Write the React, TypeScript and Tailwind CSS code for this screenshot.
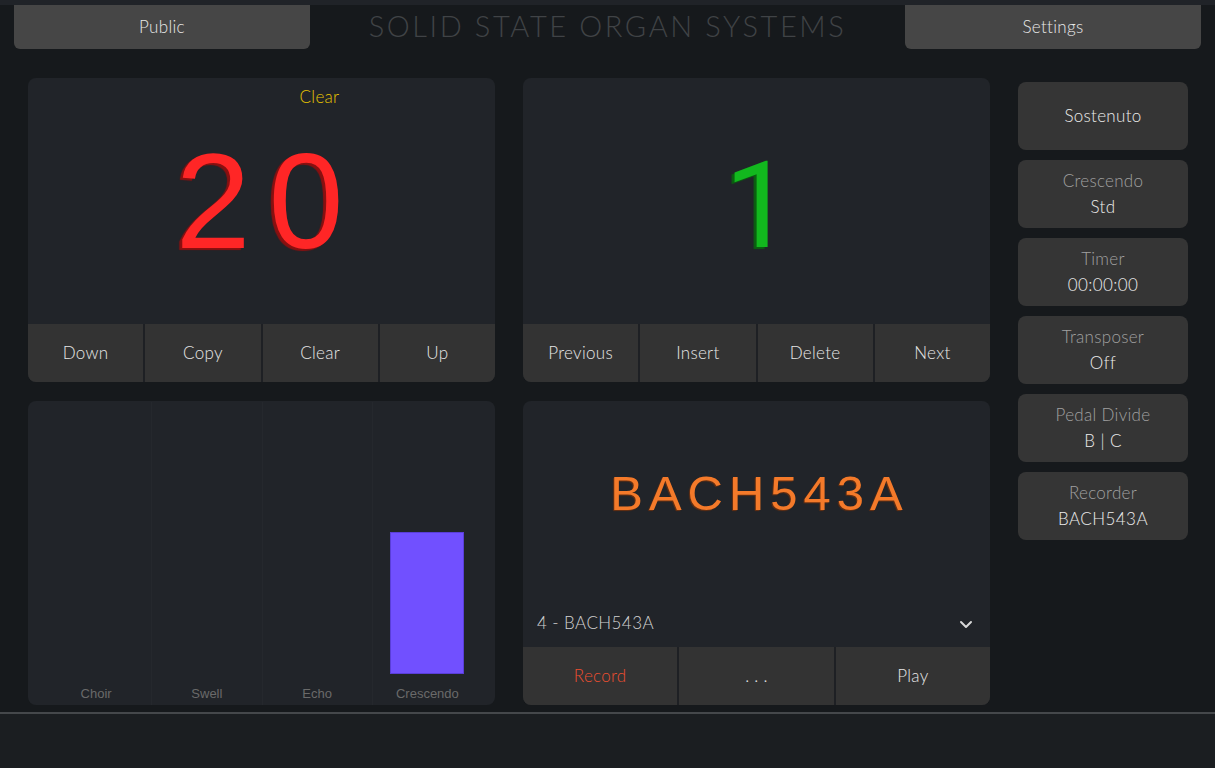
const ui = { fontFamily: "Lato, 'Noto Sans', sans-serif" };
const arial = { fontFamily: "'Liberation Sans', Arial, sans-serif" };
const roboto = { fontFamily: "Roboto, 'Liberation Sans', sans-serif" };

function RowButton({ label, className = "" }: { label: string; className?: string }) {
  return (
    <button className={`flex-1 bg-[#333333] flex items-center justify-center text-[17px] font-light text-[#e6e6e6] tracking-[0.3px] ${className}`}>
      {label}
    </button>
  );
}

function SideTile({ label, value }: { label: string; value?: string }) {
  return (
    <div className="h-[68px] rounded-lg bg-[#353535] flex flex-col items-center justify-center leading-[26px] font-light tracking-[0.3px]">
      {value ? (
        <>
          <span className="text-[17px] text-[#a0a0a0]">{label}</span>
          <span className="text-[17px] text-[#ececec] tracking-wide">{value}</span>
        </>
      ) : (
        <span className="text-[17px] text-[#ececec]">{label}</span>
      )}
    </div>
  );
}

const columns = [
  { name: "Choir", level: 0 },
  { name: "Swell", level: 0 },
  { name: "Echo", level: 0 },
  { name: "Crescendo", level: 142 },
];

export default function App() {
  return (
    <div className="w-[1215px] h-[768px] bg-[#16191c] flex flex-col overflow-hidden" style={ui}>
      <div className="h-[5px] bg-[#202328]" />
      <header className="flex items-start justify-between px-[14px]">
        <button className="w-[296px] h-[44px] bg-[#464646] rounded-b-md text-[17px] font-light tracking-[0.3px] text-[#e8e8e8]">Public</button>
        <h1 className="text-[29px] font-light tracking-[2.6px] text-[#404346] leading-[42px]">SOLID STATE ORGAN SYSTEMS</h1>
        <button className="w-[296px] h-[44px] bg-[#464646] rounded-b-md text-[17px] font-light tracking-[0.3px] text-[#e8e8e8]">Settings</button>
      </header>

      <main className="flex gap-[28px] pl-[28px] pt-[29px]">
        <div className="grid grid-cols-[467px_467px] grid-rows-[304px_304px] gap-x-[28px] gap-y-[19px]">
          {/* combination panel */}
          <section className="bg-[#212429] rounded-lg overflow-hidden flex flex-col">
            <div className="flex-1 flex flex-col items-center">
              <span className="mt-[6px] ml-[116px] text-[17px] font-light tracking-[0.3px] text-[#e8c400]">Clear</span>
              <span
                className="mt-[24px] ml-[-4px] text-[135px] leading-none text-[#ff2626] tracking-[18px] pl-[18px] [text-shadow:-3px_2px_1px_#8a1010]"
                style={arial}
              >
                20
              </span>
            </div>
            <div className="h-[58px] flex gap-[2px] bg-[#1e2024]">
              <RowButton label="Down" />
              <RowButton label="Copy" />
              <RowButton label="Clear" />
              <RowButton label="Up" />
            </div>
          </section>

          {/* sequencer panel */}
          <section className="bg-[#212429] rounded-lg overflow-hidden flex flex-col">
            <div className="flex-1 flex items-center justify-center">
              <span
                className="mt-[10px] ml-[4px] text-[121px] leading-none text-[#12b81e] [text-shadow:-3px_2px_1px_#0a6010]"
                style={roboto}
              >
                1
              </span>
            </div>
            <div className="h-[58px] flex gap-[2px] bg-[#1e2024]">
              <RowButton label="Previous" />
              <RowButton label="Insert" />
              <RowButton label="Delete" />
              <RowButton label="Next" />
            </div>
          </section>

          {/* expression chart */}
          <section className="bg-[#212429] rounded-lg flex flex-col px-[13px] pt-[1px]">
            <div className="flex-1 grid grid-cols-4">
              {columns.map((c, i) => (
                <div key={c.name} className={`flex flex-col ${i > 0 ? "border-l border-[#25282d]" : ""}`}>
                  <div className="flex-1 flex items-end justify-center pb-[9px]">
                    {c.level > 0 && (
                      <div
                        className="w-[74px] bg-[#7150ff] border border-[#5a3ed8]"
                        style={{ height: `${c.level}px` }}
                      />
                    )}
                  </div>
                  <span className="text-center text-[13px] text-[#6a6a6a] leading-[22px]" style={arial}>
                    {c.name}
                  </span>
                </div>
              ))}
            </div>
          </section>

          {/* recorder panel */}
          <section className="bg-[#212429] rounded-lg overflow-hidden flex flex-col">
            <div className="flex-1 flex items-center justify-center">
              <span
                className="mt-[-14px] text-[49px] leading-none text-[#f47a2a] tracking-[6px] pl-[6px] [text-shadow:-1px_1px_1px_#6a3010]"
                style={arial}
              >
                BACH543A
              </span>
            </div>
            <div className="h-[48px] flex items-center justify-between px-[14px]">
              <span className="text-[17px] font-light text-[#d2d2d2] tracking-wide">4 - BACH543A</span>
              <svg width="14" height="9" viewBox="0 0 14 9" fill="none" className="mr-[3px] mt-[3px]">
                <path d="M2 2l5 5 5-5" stroke="#d8d8d8" strokeWidth="2" strokeLinecap="round" strokeLinejoin="round" />
              </svg>
            </div>
            <div className="h-[58px] flex gap-[2px] bg-[#1e2024]">
              <RowButton label="Record" className="!text-[#ec4e30]" />
              <RowButton label=". . ." />
              <RowButton label="Play" />
            </div>
          </section>
        </div>

        <aside className="w-[170px] flex flex-col gap-[10px] pt-[4px]">
          <SideTile label="Sostenuto" />
          <SideTile label="Crescendo" value="Std" />
          <SideTile label="Timer" value="00:00:00" />
          <SideTile label="Transposer" value="Off" />
          <SideTile label="Pedal Divide" value="B | C" />
          <SideTile label="Recorder" value="BACH543A" />
        </aside>
      </main>

      <div className="mt-[7px] h-[2px] bg-[#45484b]" />
      <div className="flex-1 bg-[#1b1e21]" />
    </div>
  );
}
